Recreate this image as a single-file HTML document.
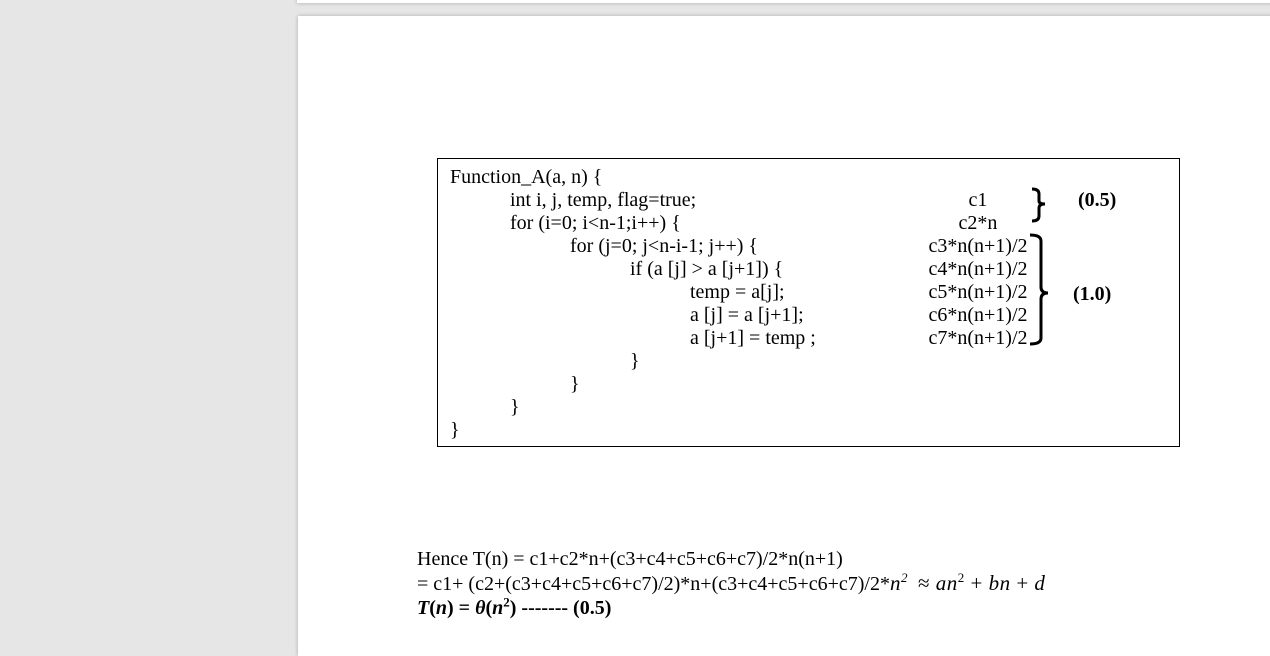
<!DOCTYPE html>
<html><head><style>
html,body{margin:0;padding:0;width:1270px;height:637px;overflow:hidden;background:#e6e6e6;}
.pg{position:absolute;background:#fff;box-shadow:0 0 4px rgba(0,0,0,.25);}
.t{position:absolute;font-family:"Liberation Serif",serif;font-size:20px;line-height:22px;white-space:nowrap;color:#000;}
.r{text-align:center;width:140px;}
.box{position:absolute;left:437px;top:158px;width:741px;height:287px;border:1px solid #000;}
.m{font-style:italic;font-size:21px;letter-spacing:0.5px}
sup{font-size:13px;line-height:0}
</style></head><body>
<div class="pg" style="left:297px;top:-20px;width:980px;height:23px"></div>
<div class="pg" style="left:298px;top:16px;width:980px;height:640px"></div>
<div class="box"></div>
<div class="t" style="left:450px;top:166px">Function_A(a, n) {</div>
<div class="t" style="left:510px;top:189px">int i, j, temp, flag=true;</div>
<div class="t" style="left:510px;top:212px">for (i=0; i&lt;n-1;i++) {</div>
<div class="t" style="left:570px;top:235px">for (j=0; j&lt;n-i-1; j++) {</div>
<div class="t" style="left:630px;top:258px">if (a [j] &gt; a [j+1]) {</div>
<div class="t" style="left:690px;top:281px">temp = a[j];</div>
<div class="t" style="left:690px;top:304px">a [j] = a [j+1];</div>
<div class="t" style="left:690px;top:327px">a [j+1] = temp ;</div>
<div class="t" style="left:630px;top:350px">}</div>
<div class="t" style="left:570px;top:373px">}</div>
<div class="t" style="left:510px;top:396px">}</div>
<div class="t" style="left:450px;top:419px">}</div>
<div class="t r" style="left:908px;top:189px">c1</div>
<div class="t r" style="left:908px;top:212px">c2*n</div>
<div class="t r" style="left:908px;top:235px">c3*n(n+1)/2</div>
<div class="t r" style="left:908px;top:258px">c4*n(n+1)/2</div>
<div class="t r" style="left:908px;top:281px">c5*n(n+1)/2</div>
<div class="t r" style="left:908px;top:304px">c6*n(n+1)/2</div>
<div class="t r" style="left:908px;top:327px">c7*n(n+1)/2</div>
<svg style="position:absolute;left:1025px;top:185px" width="40" height="165">
<path d="M7 4 Q14 4 14 9 V16 Q14 19 20 19 Q14 19 14 23 V31 Q14 36 7 36" fill="none" stroke="#000" stroke-width="3"/>
<path d="M5 50 Q16 50 16 56 V102 Q16 108 23 108 Q16 108 16 114 V153 Q16 159 5 159" fill="none" stroke="#000" stroke-width="3"/>
</svg>
<div class="t" style="left:1078px;top:189px;font-weight:bold">(0.5)</div>
<div class="t" style="left:1073px;top:283px;font-weight:bold">(1.0)</div>
<div class="t" style="left:417px;top:548px">Hence T(n) = c1+c2*n+(c3+c4+c5+c6+c7)/2*n(n+1)</div>
<div class="t" style="left:417px;top:572px">= c1+ (c2+(c3+c4+c5+c6+c7)/2)*n+(c3+c4+c5+c6+c7)/2*<span class="m">n<sup>2</sup></span> &nbsp;<span class="m" style="font-style:normal">≈ <i>an</i><sup>2</sup> + <i>bn</i> + <i>d</i></span></div>
<div class="t" style="left:417px;top:597px;font-weight:bold"><i>T</i>(<i>n</i>) = <i>θ</i>(<i>n</i><sup>2</sup>) ------- (0.5)</div>
</body></html>
